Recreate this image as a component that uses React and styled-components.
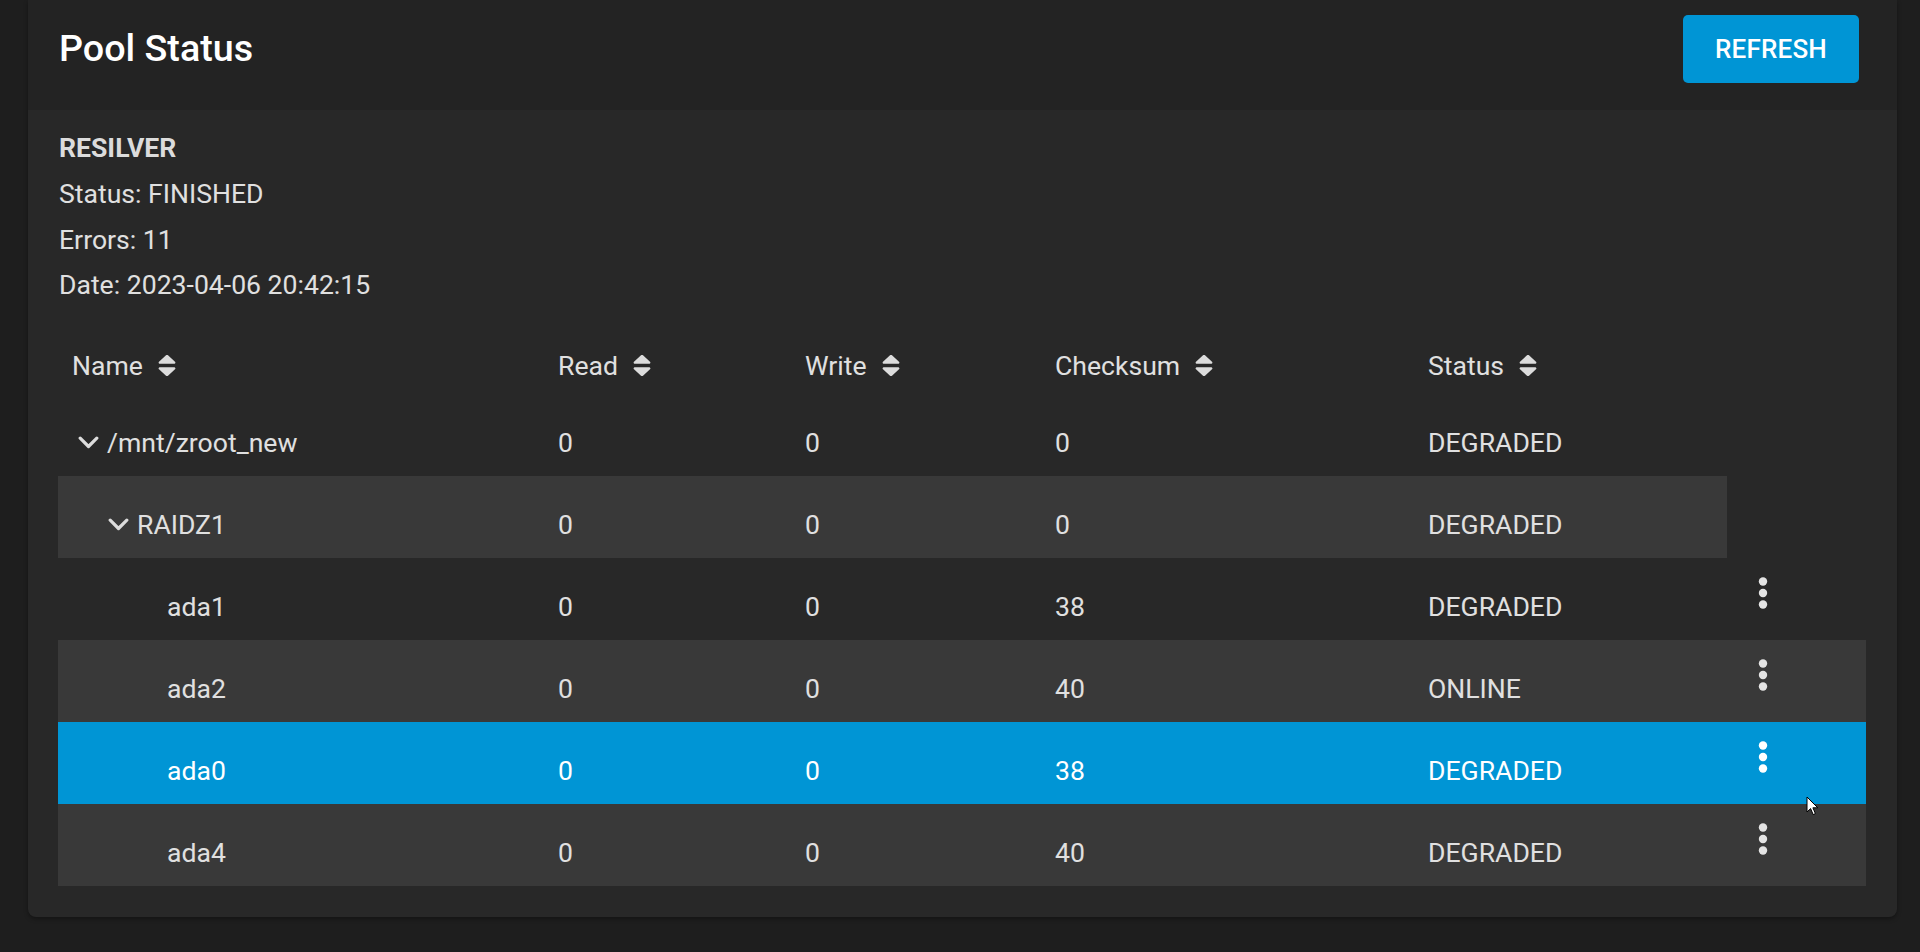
import React from 'react';
import styled, { createGlobalStyle } from 'styled-components';

const GlobalStyle = createGlobalStyle`
  html, body {
    margin: 0;
    padding: 0;
    background: #1e1e1e;
  }
  body {
    font-family: Roboto, "Noto Sans", "Liberation Sans", sans-serif;
    color: #e0e0e0;
    -webkit-font-smoothing: antialiased;
  }
  * { box-sizing: border-box; }
`;

const COLS = [486, 247, 250, 373, 313];
const ACTIONS_COL = 139;
const TEXT_SIZE = '26.6px';

const Page = styled.div`
  position: relative;
  min-height: 952px;
  padding: 0 23px 36px 28px;
`;

const Card = styled.section`
  background: #282828;
  border-radius: 0 0 8px 8px;
  box-shadow: 0 2px 4px rgba(0, 0, 0, 0.35);
  overflow: hidden;
`;

const CardHeader = styled.header`
  height: 110px;
  background: #232323;
  display: flex;
  align-items: center;
  justify-content: space-between;
  padding: 0 38px 12px 31px;
`;

const Title = styled.h1`
  margin: 0;
  font-size: 37.7px;
  font-weight: 500;
  line-height: 1.2;
  color: #ffffff;
`;

const Button = styled.button`
  height: 68px;
  padding: 0 32px;
  border: none;
  border-radius: 5px;
  background: #0095d5;
  color: #ffffff;
  font-family: inherit;
  font-size: 26px;
  font-weight: 500;
  letter-spacing: 0.2px;
  cursor: pointer;
`;

const CardBody = styled.div`
  padding: 15px 31px 31px 30px;
`;

const Info = styled.div`
  padding-left: 1px;
  font-size: ${TEXT_SIZE};
  line-height: 45.8px;
  color: #e0e0e0;
`;

const InfoHeading = styled.div`
  font-weight: 700;
  color: #dcdcdc;
`;

const InfoLine = styled.div``;

const Table = styled.div`
  display: flex;
  flex-direction: column;
  align-items: flex-start;
  margin-top: 22px;
`;

const HeaderRow = styled.div`
  display: grid;
  grid-template-columns: ${COLS.map((c) => `${c}px`).join(' ')} ${ACTIONS_COL}px;
  height: 64px;
  align-items: center;
`;

const HeaderCell = styled.div`
  display: flex;
  align-items: center;
  gap: 15px;
  padding: 7px 0 0 14px;
  font-size: ${TEXT_SIZE};
  color: #e0e0e0;
`;

const Row = styled.div`
  display: grid;
  grid-template-columns: ${({ $withActions }) =>
    COLS.map((c) => `${c}px`).join(' ') + ($withActions ? ` ${ACTIONS_COL}px` : '')};
  height: 82px;
  align-items: center;
  background: ${({ $selected, $striped }) =>
    $selected ? '#0095d5' : $striped ? '#393939' : 'transparent'};
  color: ${({ $selected }) => ($selected ? '#ffffff' : '#e0e0e0')};
`;

const Cell = styled.div`
  padding: 15px 0 0 14px;
  font-size: ${TEXT_SIZE};
  white-space: nowrap;
`;

const NameCell = styled(Cell)`
  display: flex;
  align-items: center;
  gap: 8px;
  padding-left: ${({ $level }) => 20 + $level * 30}px;
`;

const ChevronSlot = styled.span`
  display: inline-flex;
  width: 21px;
  height: 14px;
  align-items: center;
  justify-content: center;
  flex: none;
`;

const ActionsCell = styled.div`
  display: flex;
  align-items: center;
  padding: 0 0 13px 12px;
`;

const KebabButton = styled.button`
  width: 48px;
  height: 48px;
  display: flex;
  align-items: center;
  justify-content: center;
  background: none;
  border: none;
  padding: 0;
  color: ${({ $selected }) => ($selected ? '#ffffff' : '#e4e4e4')};
  cursor: pointer;
`;

const Pointer = styled.svg`
  position: absolute;
  left: 1806px;
  top: 796px;
  pointer-events: none;
`;

const SortIcon = () => (
  <svg width="18" height="21" viewBox="7 57 306 398" preserveAspectRatio="none" fill="#dcdcdc">
    <path d="M41 288h238c21.4 0 32.1 25.9 17 41L177 448c-9.4 9.4-24.6 9.4-33.9 0L24 329c-15.1-15.1-4.4-41 17-41zm255-105L177 64c-9.4-9.4-24.6-9.4-33.9 0L24 183c-15.1 15.1-4.4 41 17 41h238c21.4 0 32.1-25.9 17-41z" />
  </svg>
);

const Chevron = () => (
  <svg width="21" height="13" viewBox="0 0 21 13" fill="none">
    <path d="M2.2 2.2 L10.5 10.5 L18.8 2.2" stroke="#dcdcdc" strokeWidth="3.2" strokeLinecap="round" strokeLinejoin="round" />
  </svg>
);

const Dots = () => (
  <svg width="10" height="32" viewBox="0 0 10 32" fill="currentColor">
    <circle cx="5" cy="4.5" r="4.2" />
    <circle cx="5" cy="16" r="4.2" />
    <circle cx="5" cy="27.5" r="4.2" />
  </svg>
);

const columns = ['Name', 'Read', 'Write', 'Checksum', 'Status'];

const devices = [
  { name: '/mnt/zroot_new', level: 0, expandable: true, read: 0, write: 0, checksum: 0, status: 'DEGRADED' },
  { name: 'RAIDZ1', level: 1, expandable: true, read: 0, write: 0, checksum: 0, status: 'DEGRADED' },
  { name: 'ada1', level: 2, read: 0, write: 0, checksum: 38, status: 'DEGRADED', disk: true },
  { name: 'ada2', level: 2, read: 0, write: 0, checksum: 40, status: 'ONLINE', disk: true },
  { name: 'ada0', level: 2, read: 0, write: 0, checksum: 38, status: 'DEGRADED', disk: true, selected: true },
  { name: 'ada4', level: 2, read: 0, write: 0, checksum: 40, status: 'DEGRADED', disk: true },
];

export default function App() {
  return (
    <>
      <GlobalStyle />
      <Page>
        <Card>
          <CardHeader>
            <Title>Pool Status</Title>
            <Button type="button">REFRESH</Button>
          </CardHeader>
          <CardBody>
            <Info>
              <InfoHeading>RESILVER</InfoHeading>
              <InfoLine>Status: FINISHED</InfoLine>
              <InfoLine>Errors: 11</InfoLine>
              <InfoLine>Date: 2023-04-06 20:42:15</InfoLine>
            </Info>
            <Table>
              <HeaderRow>
                {columns.map((c) => (
                  <HeaderCell key={c}>
                    {c}
                    <SortIcon />
                  </HeaderCell>
                ))}
                <div />
              </HeaderRow>
              {devices.map((d, i) => (
                <Row key={d.name} $striped={i % 2 === 1} $selected={d.selected} $withActions={d.disk}>
                  <NameCell $level={d.level}>
                    {d.expandable ? (
                      <ChevronSlot>
                        <Chevron />
                      </ChevronSlot>
                    ) : (
                      <ChevronSlot />
                    )}
                    {d.name}
                  </NameCell>
                  <Cell>{d.read}</Cell>
                  <Cell>{d.write}</Cell>
                  <Cell>{d.checksum}</Cell>
                  <Cell>{d.status}</Cell>
                  {d.disk && (
                    <ActionsCell>
                      <KebabButton type="button" $selected={d.selected} aria-label="Disk actions">
                        <Dots />
                      </KebabButton>
                    </ActionsCell>
                  )}
                </Row>
              ))}
            </Table>
          </CardBody>
        </Card>
        <Pointer width="13" height="20" viewBox="0 0 13 20">
          <path d="M1 1 L1 16 L4.6 12.6 L7.2 18.6 L9.4 17.6 L6.9 11.8 L11.8 11.8 Z" fill="#ffffff" stroke="#000000" strokeWidth="1" strokeLinejoin="round" />
        </Pointer>
      </Page>
    </>
  );
}
